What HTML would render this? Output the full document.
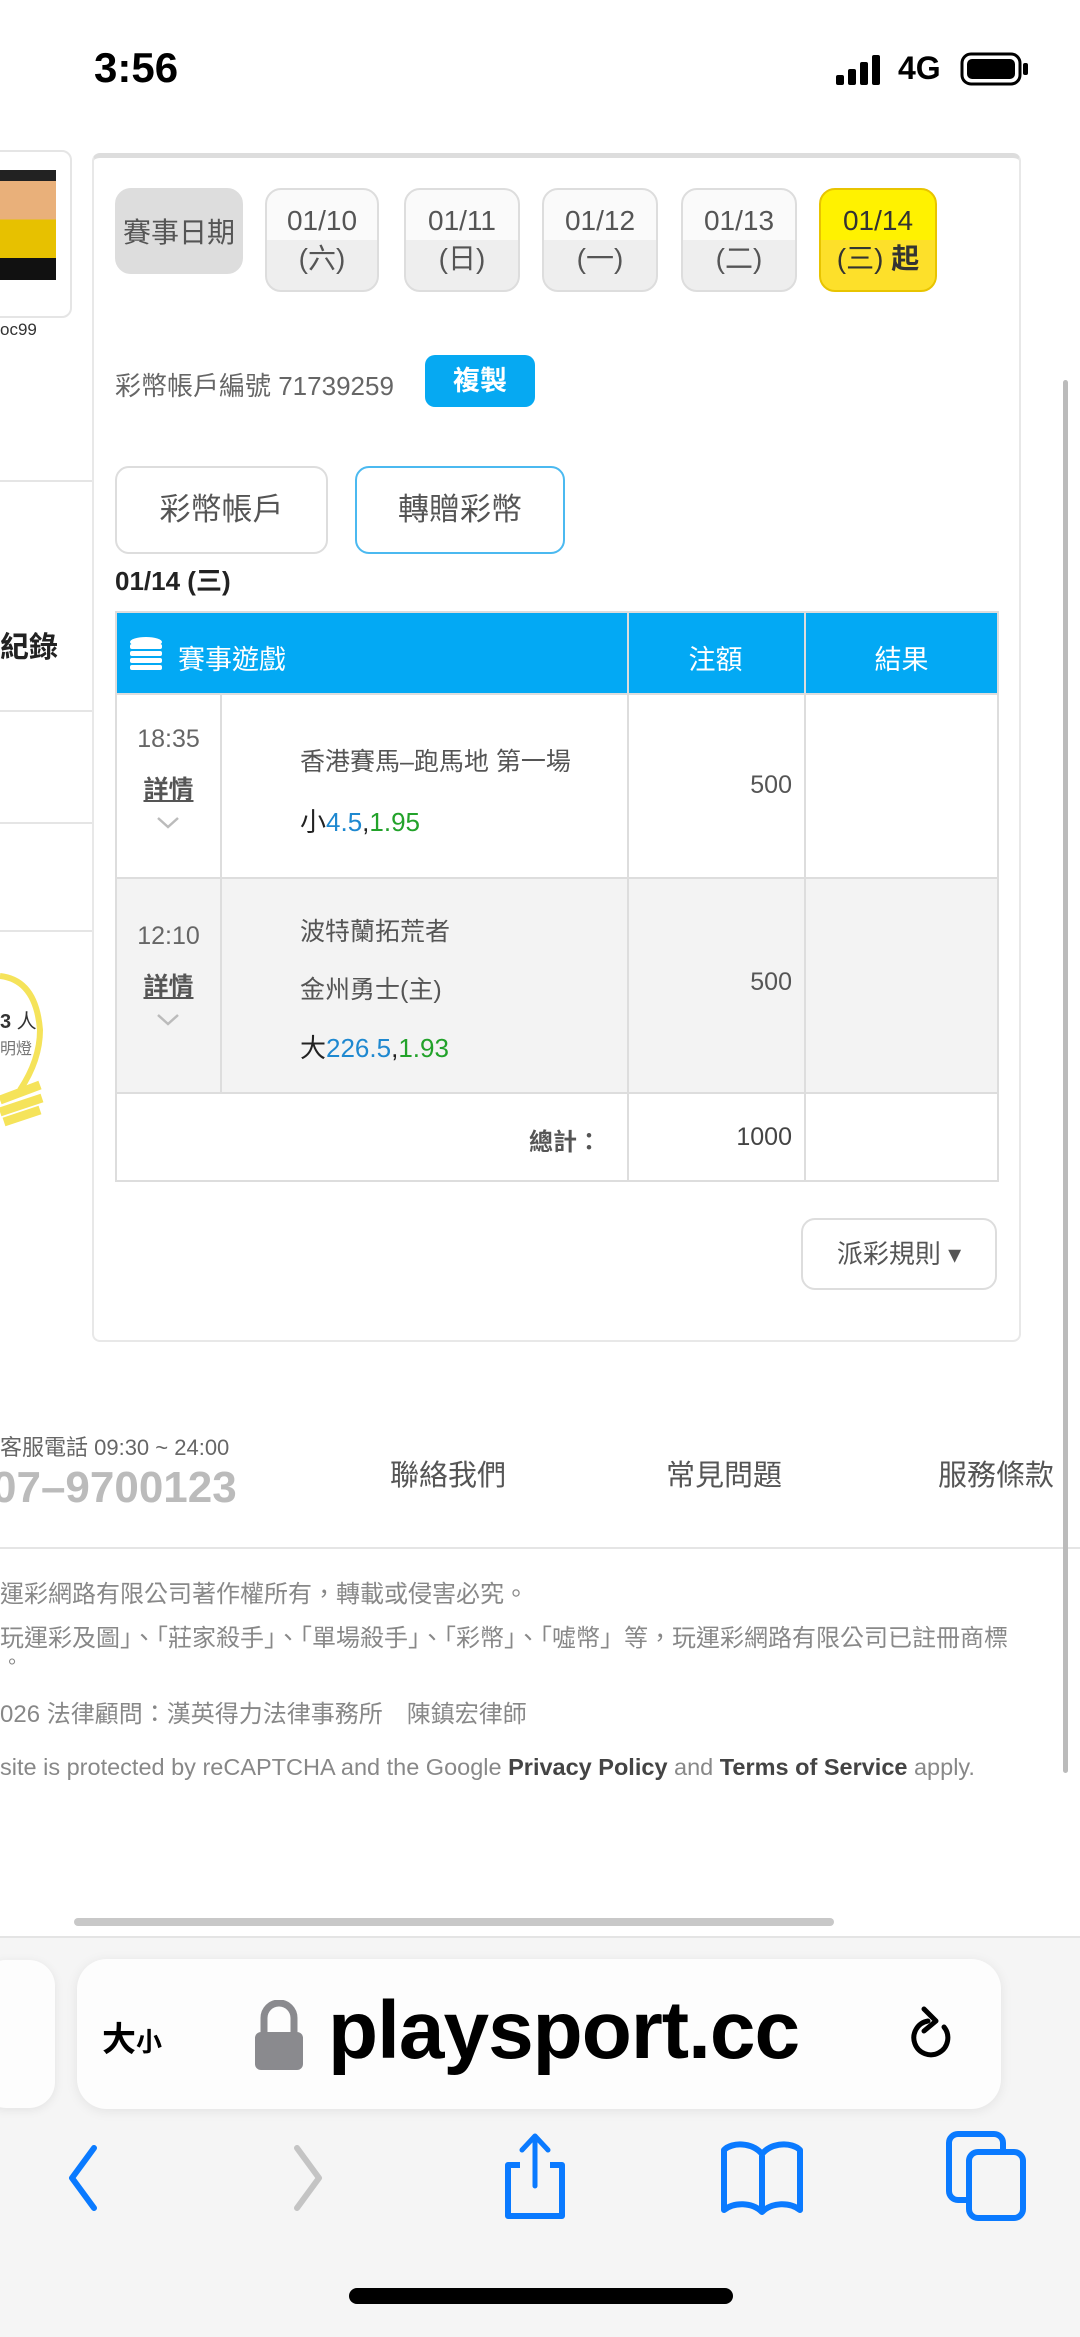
<!DOCTYPE html>
<html><head><meta charset="utf-8"><style>
*{margin:0;padding:0;box-sizing:border-box}
body{width:1080px;height:2337px;background:#fff;position:relative;overflow:hidden;font-family:"Liberation Sans","Noto Sans CJK TC",sans-serif;color:#555}
.a{position:absolute}
.btn{position:absolute;border:2px solid #ddd;border-radius:16px;background:linear-gradient(#fafafa 50%,#eee 50%);text-align:center;color:#555;font-size:28px;line-height:38px;padding-top:12px}
</style></head><body>
<!-- status bar -->
<div class="a" style="left:94px;top:44px;font-size:42px;font-weight:bold;color:#000">3:56</div>
<svg class="a" style="left:836px;top:55px" width="50" height="30"><rect x="0" y="20" width="8" height="10" rx="2" fill="#000"/><rect x="12" y="14" width="8" height="16" rx="2" fill="#000"/><rect x="24" y="7" width="8" height="23" rx="2" fill="#000"/><rect x="36" y="0" width="8" height="30" rx="2" fill="#000"/></svg>
<div class="a" style="left:898px;top:50px;font-size:32px;font-weight:bold;color:#000">4G</div>
<svg class="a" style="left:960px;top:52px" width="70" height="34"><rect x="2" y="2" width="58" height="30" rx="9" fill="none" stroke="#000" stroke-width="3"/><rect x="7" y="7" width="48" height="20" rx="5" fill="#000"/><rect x="63" y="11" width="5" height="12" rx="2" fill="#000"/></svg>

<!-- left sidebar -->
<div class="a" style="left:-10px;top:150px;width:82px;height:168px;border:2px solid #e5e5e5;border-radius:10px"></div>
<div class="a" style="left:0;top:170px;width:56px;height:110px;background:linear-gradient(#222 0 10%,#e9b07a 10% 45%,#e7c100 45% 80%,#111 80%)"></div>
<div class="a" style="left:0;top:320px;font-size:17px;color:#333">oc99</div>
<div class="a" style="left:0;top:480px;width:92px;height:2px;background:#e5e5e5"></div>
<div class="a" style="left:0;top:624px;font-size:29px;font-weight:bold;color:#222">紀錄</div>
<div class="a" style="left:0;top:710px;width:92px;height:2px;background:#e5e5e5"></div>
<div class="a" style="left:0;top:822px;width:92px;height:2px;background:#e5e5e5"></div>
<div class="a" style="left:0;top:930px;width:92px;height:2px;background:#e5e5e5"></div>
<svg class="a" style="left:0;top:960px" width="60" height="170"><path d="M0 16 Q36 20 40 70 Q40 100 20 130" fill="none" stroke="#f5e35a" stroke-width="6"/><path d="M0 140 L40 125 M0 152 L42 138 M4 162 L40 150" stroke="#f5e35a" stroke-width="9"/></svg>
<div class="a" style="left:0;top:1005px;font-size:20px;color:#333"><b>3</b> 人</div>
<div class="a" style="left:0;top:1035px;font-size:16px;color:#777">明燈</div>

<!-- main card -->
<div class="a" style="left:92px;top:153px;width:929px;height:1189px;border:2px solid #e8e8e8;border-top:5px solid #ddd;border-radius:8px"></div>
<div class="btn" style="left:115px;top:188px;width:128px;height:86px;background:#ddd;padding-top:24px">賽事日期</div>
<div class="btn" style="left:265px;top:188px;width:114px;height:104px">01/10<br>(六)</div>
<div class="btn" style="left:404px;top:188px;width:116px;height:104px">01/11<br>(日)</div>
<div class="btn" style="left:542px;top:188px;width:116px;height:104px">01/12<br>(一)</div>
<div class="btn" style="left:681px;top:188px;width:116px;height:104px">01/13<br>(二)</div>
<div class="btn" style="left:819px;top:188px;width:118px;height:104px;background:linear-gradient(#fff200 50%,#fde02a 50%);border-color:#e8c400;color:#333">01/14<br>(三) <b>起</b></div>

<div class="a" style="left:115px;top:366px;font-size:26px;color:#666">彩幣帳戶編號 71739259</div>
<div class="a" style="left:425px;top:355px;width:110px;height:52px;background:#06a9f2;border-radius:10px;color:#fff;font-size:27px;font-weight:bold;text-align:center;line-height:52px">複製</div>

<div class="a" style="left:115px;top:466px;width:213px;height:88px;border:2px solid #ddd;border-radius:14px;text-align:center;line-height:84px;font-size:31px;color:#555">彩幣帳戶</div>
<div class="a" style="left:355px;top:466px;width:210px;height:88px;border:2px solid #4bb9f0;border-radius:14px;text-align:center;line-height:84px;font-size:31px;color:#555">轉贈彩幣</div>
<div class="a" style="left:115px;top:561px;font-size:26px;font-weight:bold;color:#222">01/14 (三)</div>

<!-- table -->
<div class="a" style="left:115px;top:611px;width:884px;height:571px;border:2px solid #ddd;border-top:none"></div>
<div class="a" style="left:115px;top:611px;width:884px;height:84px;background:#03a9f4;border:2px solid #ddd"></div>
<div class="a" style="left:627px;top:611px;width:2px;height:84px;background:#ddd"></div>
<div class="a" style="left:804px;top:611px;width:2px;height:84px;background:#ddd"></div>
<svg class="a" style="left:128px;top:636px" width="36" height="38"><g fill="#fff"><ellipse cx="18" cy="6" rx="16" ry="5"/><rect x="2" y="8" width="32" height="5" rx="2"/><rect x="2" y="15" width="32" height="5" rx="2"/><rect x="2" y="22" width="32" height="5" rx="2"/><rect x="2" y="29" width="32" height="5" rx="2"/></g></svg>
<div class="a" style="left:178px;top:638px;font-size:27px;color:#fff">賽事遊戲</div>
<div class="a" style="left:627px;top:638px;width:177px;text-align:center;font-size:27px;color:#fff">注額</div>
<div class="a" style="left:804px;top:638px;width:195px;text-align:center;font-size:27px;color:#fff">結果</div>

<div class="a" style="left:117px;top:877px;width:880px;height:215px;background:#f3f3f3"></div>
<div class="a" style="left:117px;top:877px;width:880px;height:2px;background:#ddd"></div>
<div class="a" style="left:117px;top:1092px;width:880px;height:2px;background:#ddd"></div>
<div class="a" style="left:220px;top:695px;width:2px;height:397px;background:#ddd"></div>
<div class="a" style="left:627px;top:695px;width:2px;height:486px;background:#ddd"></div>
<div class="a" style="left:804px;top:695px;width:2px;height:486px;background:#ddd"></div>

<div class="a" style="left:117px;top:725px;width:103px;text-align:center;font-size:25px;color:#666">18:35</div>
<div class="a" style="left:117px;top:770px;width:103px;text-align:center;font-size:25px;color:#555;font-weight:bold;text-decoration:underline">詳情</div>
<svg class="a" style="left:156px;top:816px" width="24" height="14"><path d="M2 2 L12 11 L22 2" fill="none" stroke="#bbb" stroke-width="2.5"/></svg>
<div class="a" style="left:300px;top:742px;font-size:25px;color:#555">香港賽馬–跑馬地 第一場</div>
<div class="a" style="left:300px;top:802px;font-size:26px;color:#222">小<span style="color:#1e88d0">4.5</span>,<span style="color:#22a22a">1.95</span></div>
<div class="a" style="left:627px;top:771px;width:165px;text-align:right;font-size:25px;color:#555">500</div>

<div class="a" style="left:117px;top:922px;width:103px;text-align:center;font-size:25px;color:#666">12:10</div>
<div class="a" style="left:117px;top:967px;width:103px;text-align:center;font-size:25px;color:#555;font-weight:bold;text-decoration:underline">詳情</div>
<svg class="a" style="left:156px;top:1013px" width="24" height="14"><path d="M2 2 L12 11 L22 2" fill="none" stroke="#bbb" stroke-width="2.5"/></svg>
<div class="a" style="left:300px;top:912px;font-size:25px;color:#555">波特蘭拓荒者</div>
<div class="a" style="left:300px;top:970px;font-size:25px;color:#555">金州勇士(主)</div>
<div class="a" style="left:300px;top:1028px;font-size:26px;color:#222">大<span style="color:#1e88d0">226.5</span>,<span style="color:#22a22a">1.93</span></div>
<div class="a" style="left:627px;top:968px;width:165px;text-align:right;font-size:25px;color:#555">500</div>

<div class="a" style="left:629px;top:1092px;width:175px;height:2px;background:#ddd"></div>
<div class="a" style="left:529px;top:1122px;font-size:24px;font-weight:bold;color:#555">總計：</div>
<div class="a" style="left:627px;top:1123px;width:165px;text-align:right;font-size:25px;color:#444">1000</div>

<div class="a" style="left:801px;top:1218px;width:196px;height:72px;border:2px solid #ddd;border-radius:14px;text-align:center;line-height:68px;font-size:26px;color:#555">派彩規則 ▾</div>

<!-- footer -->
<div class="a" style="left:0;top:1430px;font-size:22px;color:#666">客服電話 09:30 ~ 24:00</div>
<div class="a" style="left:-8px;top:1463px;font-size:44px;color:#bbb;font-weight:bold">07–9700123</div>
<div class="a" style="left:390px;top:1452px;font-size:29px;color:#555">聯絡我們</div>
<div class="a" style="left:666px;top:1452px;font-size:29px;color:#555">常見問題</div>
<div class="a" style="left:938px;top:1452px;font-size:29px;color:#555">服務條款</div>
<div class="a" style="left:0;top:1547px;width:1080px;height:2px;background:#e5e5e5"></div>
<div class="a" style="left:0;top:1574px;font-size:24px;color:#888;white-space:nowrap">運彩網路有限公司著作權所有，轉載或侵害必究。</div>
<div class="a" style="left:0;top:1618px;font-size:24px;color:#888;white-space:nowrap">玩運彩及圖」、「莊家殺手」、「單場殺手」、「彩幣」、「噓幣」等，玩運彩網路有限公司已註冊商標</div>
<div class="a" style="left:2px;top:1646px;font-size:20px;color:#888">。</div>
<div class="a" style="left:0;top:1694px;font-size:24px;color:#888;white-space:nowrap">026 法律顧問：漢英得力法律事務所　陳鎮宏律師</div>
<div class="a" style="left:0;top:1754px;font-size:23.5px;color:#888;white-space:nowrap">site is protected by reCAPTCHA and the Google <b style="color:#444">Privacy Policy</b> and <b style="color:#444">Terms of Service</b> apply.</div>

<!-- scrollbars -->
<div class="a" style="left:1063px;top:380px;width:5px;height:1393px;background:#bbb;border-radius:3px"></div>
<div class="a" style="left:74px;top:1918px;width:760px;height:8px;background:#c8c8c8;border-radius:4px"></div>

<!-- safari bottom -->
<div class="a" style="left:0;top:1936px;width:1080px;height:401px;background:#f5f5f5;border-top:2px solid #e4e4e4"></div>
<div class="a" style="left:-20px;top:1960px;width:75px;height:148px;background:#fdfdfd;border-radius:26px;box-shadow:0 2px 10px rgba(0,0,0,.08)"></div>
<div class="a" style="left:77px;top:1959px;width:924px;height:150px;background:#fdfdfd;border-radius:30px;box-shadow:0 2px 12px rgba(0,0,0,.08)"></div>
<div class="a" style="left:102px;top:2012px;font-size:34px;font-weight:bold;color:#000;font-family:'Noto Sans CJK TC',sans-serif">大<span style="font-size:26px">小</span></div>
<svg class="a" style="left:252px;top:2000px" width="54" height="72"><path d="M12 34 V18 A15 15 0 0 1 42 18 V34" fill="none" stroke="#8a8a8e" stroke-width="7"/><rect x="3" y="32" width="48" height="38" rx="6" fill="#8a8a8e"/></svg>
<div class="a" style="left:328px;top:1984px;font-size:82px;color:#000;font-weight:bold;letter-spacing:-1px">playsport.cc</div>
<svg class="a" style="left:910px;top:2005px" width="50" height="62"><path d="M34 22 A17 17 0 1 1 18 16" fill="none" stroke="#000" stroke-width="5" stroke-linecap="round"/><path d="M14 4 L26 16 L14 26" fill="none" stroke="#000" stroke-width="5" stroke-linecap="round" stroke-linejoin="round"/></svg>
<svg class="a" style="left:56px;top:2142px" width="50" height="72"><path d="M38 6 L16 36 L38 66" fill="none" stroke="#0a7aff" stroke-width="6" stroke-linecap="round" stroke-linejoin="round"/></svg>
<svg class="a" style="left:285px;top:2142px" width="50" height="72"><path d="M12 6 L34 36 L12 66" fill="none" stroke="#c4c4c4" stroke-width="6" stroke-linecap="round" stroke-linejoin="round"/></svg>
<svg class="a" style="left:500px;top:2130px" width="70" height="92"><path d="M20 35 H8 V86 H62 V35 H50" fill="none" stroke="#0a7aff" stroke-width="6" stroke-linejoin="round"/><path d="M35 56 V6 M22 20 L35 6 L48 20" fill="none" stroke="#0a7aff" stroke-width="5" stroke-linecap="round" stroke-linejoin="round"/></svg>
<svg class="a" style="left:718px;top:2138px" width="88" height="80"><path d="M44 16 C34 4 14 4 6 12 V72 C16 64 34 64 44 74 C54 64 72 64 82 72 V12 C74 4 54 4 44 16 Z M44 16 V74" fill="none" stroke="#0a7aff" stroke-width="6" stroke-linejoin="round"/></svg>
<svg class="a" style="left:945px;top:2130px" width="82" height="92"><rect x="4" y="4" width="54" height="66" rx="9" fill="none" stroke="#0a7aff" stroke-width="6"/><rect x="24" y="22" width="54" height="66" rx="9" fill="#f5f5f5" stroke="#0a7aff" stroke-width="6"/></svg>
<div class="a" style="left:349px;top:2288px;width:384px;height:16px;background:#000;border-radius:8px"></div>
</body></html>
